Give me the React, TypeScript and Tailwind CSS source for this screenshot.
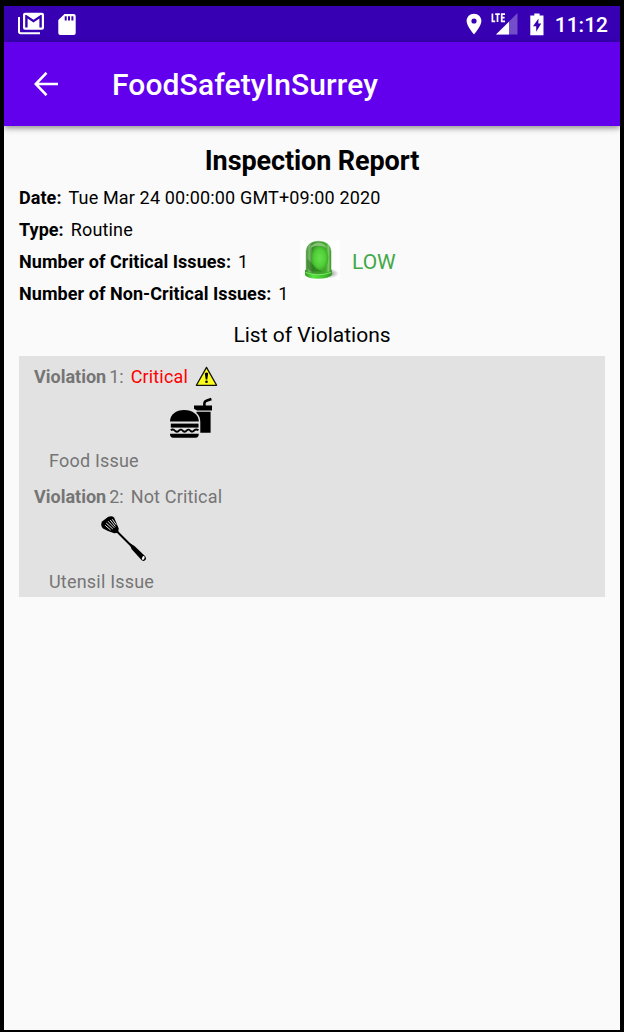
import React from "react";

function GmailIcon() {
  return (
    <svg className="h-[24px] w-[27px] shrink-0" viewBox="0 0 27 24">
      <path d="M1 5V19.5Q1 21.2 2.7 21.2H22" fill="none" stroke="#fff" strokeWidth="2" />
      <path
        fillRule="evenodd"
        fill="#fff"
        d="M7 .8H24Q26 .8 26 2.8V15.8Q26 17.8 24 17.8H7Q5 17.8 5 15.8V2.8Q5 .8 7 .8ZM7.2 3V15.6H9.6V6.6L15.5 10.6L21.4 6.6V15.6H23.8V3H22.6L15.5 7.8L8.4 3Z"
      />
      <path fill="#fff" d="M9 2.4H22L15.5 7Z" />
    </svg>
  );
}

function SdCardIcon() {
  return (
    <svg className="h-[23px] w-[18px] shrink-0" viewBox="0 0 18 23">
      <path
        fillRule="evenodd"
        fill="#fff"
        d="M6.5 1H15.7Q17.7 1 17.7 3V20Q17.7 22 15.7 22H2.3Q.3 22 .3 20V7ZM6.7 3.2V7.4H8.7V3.2ZM10 3.2V7.4H12V3.2ZM13.4 3.2V7.4H15.4V3.2Z"
      />
    </svg>
  );
}

function PinIcon() {
  return (
    <svg className="h-[22px] w-[16px] shrink-0" viewBox="0 0 16 22">
      <path
        fillRule="evenodd"
        fill="#fff"
        d="M8 .7C3.8 .7 .6 3.9 .6 8C.6 13.2 8 21.3 8 21.3S15.4 13.2 15.4 8C15.4 3.9 12.2 .7 8 .7ZM8 5.4A2.6 2.6 0 1 1 8 10.6A2.6 2.6 0 1 1 8 5.4Z"
      />
    </svg>
  );
}

function SignalIcon() {
  return (
    <svg className="h-[22px] w-[27px] shrink-0" viewBox="0 0 27 22">
      <path d="M26.5 0V21.5H5Z" fill="#fff" opacity=".3" />
      <path d="M18 8.7V21.5H5Z" fill="#fff" />
      <path
        d="M1.4 .5V8.3H4.2M4.2 1.2H8.8M6.5 1.2V9M14 1.2H10.7V8.3H14M10.7 4.7H13.6"
        fill="none"
        stroke="#fff"
        strokeWidth="1.7"
      />
    </svg>
  );
}

function BatteryIcon() {
  return (
    <svg className="h-[23px] w-[14px] shrink-0" viewBox="0 0 14 23">
      <path
        fillRule="evenodd"
        fill="#fff"
        d="M4.3 .5H9.6V2.6H13.5V22.2H.3V2.6H4.3ZM8.5 5.5L3 13.2H6.2V18.7L11.2 10.6H8.3Z"
      />
    </svg>
  );
}

function Beacon() {
  return (
    <svg className="h-[40px] w-[40px] shrink-0 bg-white" viewBox="0 0 40 40">
      <defs>
        <linearGradient id="glass">
          <stop offset="0" stopColor="#3f8a2e" />
          <stop offset=".12" stopColor="#7db870" />
          <stop offset=".25" stopColor="#3d932b" />
          <stop offset=".8" stopColor="#41ab2c" />
          <stop offset=".9" stopColor="#79c966" />
          <stop offset="1" stopColor="#3a9428" />
        </linearGradient>
        <radialGradient id="glow">
          <stop offset="0" stopColor="#66e04c" />
          <stop offset=".65" stopColor="#50d038" />
          <stop offset="1" stopColor="#41ab2c" />
        </radialGradient>
        <linearGradient id="rim">
          <stop offset="0" stopColor="#2f9d1d" />
          <stop offset=".3" stopColor="#5ce346" />
          <stop offset=".75" stopColor="#3fbd2c" />
          <stop offset="1" stopColor="#2a931b" />
        </linearGradient>
        <radialGradient id="shade">
          <stop offset="0" stopColor="#555" stopOpacity=".75" />
          <stop offset="1" stopColor="#777" stopOpacity="0" />
        </radialGradient>
      </defs>
      <ellipse cx="29" cy="33.5" rx="10" ry="5" fill="url(#shade)" />
      <path d="M5 30Q18 26 31.8 30V35Q29 38.7 18 38.7Q7 38.7 5 35Z" fill="url(#rim)" />
      <path
        d="M6.2 31V11Q7 1.5 18.5 1.2Q30 1.5 31 11V31Q26 34 18.5 34Q10 34 6.2 31Z"
        fill="url(#glass)"
        stroke="#4d9e3c"
        strokeWidth=".5"
      />
      <ellipse cx="19.8" cy="18" rx="8.5" ry="12.5" fill="url(#glow)" />
      <path d="M10 8Q13 2.6 18.5 2.5Q24 2.6 27 8Q18 3.5 10 8Z" fill="#b6d9aa" opacity=".6" />
      <path d="M7.5 19Q11 22 14 26T22 31.5L12 31.5Q8 30 7.5 27Z" fill="#246f17" opacity=".5" />
      <path d="M5.5 32.5Q18 37 31 32.5" fill="none" stroke="#75e860" strokeWidth="1.2" />
    </svg>
  );
}

function WarningIcon() {
  return (
    <svg className="h-[21px] w-[23px] shrink-0" viewBox="0 0 23 21">
      <path d="M11.5 1.4L21.6 19.3H1.4Z" fill="#fcfc1c" stroke="#111" strokeWidth="1.3" strokeLinejoin="round" />
      <path d="M9.8 7.3Q11.5 5.6 13.2 7.3L12.3 13.5H10.7Z" fill="#000" />
      <circle cx="11.5" cy="15.8" r="1.3" fill="#000" />
    </svg>
  );
}

function FoodIcon() {
  return (
    <svg className="h-[42px] w-[44px] shrink-0" viewBox="0 0 44 42">
      <path d="M35.4 10V7.2Q35.6 5.4 37.4 4.8L42.4 3" fill="none" stroke="#000" strokeWidth="2.6" />
      <path d="M25 9.6H43V14.5H28L25 12.8Z" />
      <path d="M27.5 15.8H41.6V36.7H31.3V26Q31.3 20 27.5 17Z" />
      <path d="M1 25.5C1 18.5 7 14 15.2 14S29.8 18.5 29.8 25.5Z" />
      <path d="M1.8 27.6H29.5V31.6H1.8Z" />
      <path
        d="M1.8 34.2Q4.2 32.6 6.2 35Q8.5 36.6 10.2 34.4Q12 32.6 14 35Q16 36.6 17.8 34.4Q19.6 32.6 21.6 35Q23.6 36.6 25.2 34.4Q27 32.6 29.5 34.2"
        fill="none"
        stroke="#000"
        strokeWidth="1.9"
      />
      <path d="M1 37.8H29.8Q29.8 41.7 26.5 41.7H4.2Q1 41.7 1 37.8Z" />
    </svg>
  );
}

function SpatulaIcon() {
  return (
    <svg className="h-[47px] w-[47px] shrink-0" viewBox="0 0 47 47">
      <path d="M2 6.5L8.3 1.8Q12 .3 14 2.5Q16.5 8 18.7 13.5L18.2 17.8L14.2 18.2Q8 16.5 3 13.5Q0 10.5 2 6.5Z" />
      <path
        d="M5.2 10.3L10.6 15M6.2 8L12.8 14M8 6.2L14.3 12.8M10.2 5L15.4 11.5M12.2 4.2L16.2 9.7"
        stroke="#e2e2e2"
        strokeWidth="1"
      />
      <path d="M17 16.5L32 31.5" stroke="#000" strokeWidth="2" />
      <path d="M29.5 28L34.5 31L45.2 41.3Q47 44 44.7 45.6Q42.5 46.5 41 44.5L31.5 34Z" />
      <ellipse cx="43.3" cy="43" rx="1.2" ry="2" transform="rotate(25 43.3 43)" fill="#fff" />
    </svg>
  );
}

function Field({ label, value }: { label: string; value: string }) {
  return (
    <div className="flex h-8 items-center whitespace-nowrap">
      <b className="mr-[7px] tracking-[0.06px]">{label}</b>
      <span className="tracking-[0.15px]">{value}</span>
    </div>
  );
}

export default function App() {
  return (
    <div className="h-[1032px] w-[624px] bg-black px-1 pt-1.5 pb-0.5 font-[Roboto,sans-serif] text-[18px] leading-6 text-black">
      <div className="flex h-full flex-col bg-[#fafafa]">
        <header className="flex h-9 shrink-0 items-center bg-[#3700b3] pr-3 pl-[14px] text-white">
          <GmailIcon />
          <div className="ml-[13px] flex">
            <SdCardIcon />
          </div>
          <div className="ml-auto flex items-center">
            <PinIcon />
            <div className="ml-[9px] flex">
              <SignalIcon />
            </div>
            <div className="mr-[11px] ml-3 flex">
              <BatteryIcon />
            </div>
            <span className="pt-0.5 text-[21px] font-medium">11:12</span>
          </div>
        </header>
        <div className="flex h-[84px] shrink-0 items-center bg-[#6200ee] pl-[30px] text-white shadow-[0_2px_6px_rgba(0,0,0,0.45)]">
          <svg className="h-6 w-6" viewBox="0 0 24 24">
            <path d="M12.5 .8L1.7 12L12.5 23.2M1.7 12H24" fill="none" stroke="#fff" strokeWidth="2.6" />
          </svg>
          <h1 className="ml-[54px] pt-0.5 text-[30px] leading-9 font-medium tracking-[0.11px]">FoodSafetyInSurrey</h1>
        </div>
        <main className="px-[15px] pt-[18px]">
          <h2 className="flex h-[38px] items-start justify-center text-[27px] leading-[34px] font-bold tracking-[-0.1px]">
            Inspection Report
          </h2>
          <div className="flex">
            <div className="w-[281px]">
              <Field label="Date:" value="Tue Mar 24 00:00:00 GMT+09:00 2020" />
              <Field label="Type:" value="Routine" />
              <Field label="Number of Critical Issues:" value="1" />
              <Field label="Number of Non-Critical Issues:" value="1" />
            </div>
            <div className="mt-[58px] flex h-10 items-center">
              <Beacon />
              <span className="ml-3 pt-[3px] text-[21px] text-[#43a847]">LOW</span>
            </div>
          </div>
          <h3 className="mt-3 mb-2 text-center text-[21px] leading-[26px]">List of Violations</h3>
          <section className="flex h-[241px] flex-col bg-[#e2e2e2] pl-[15px] text-[#757575]">
            <div className="flex h-10 items-center whitespace-nowrap">
              <b className="pt-0.5">Violation</b>
              <span className="ml-[3px] pt-0.5">1:</span>
              <span className="ml-[7px] pt-0.5 tracking-[0.15px] text-[#ff0000]">Critical</span>
              <div className="ml-[7px] flex">
                <WarningIcon />
              </div>
            </div>
            <div className="flex h-[53px] pl-[135px]">
              <FoodIcon />
            </div>
            <div className="pl-[15px] tracking-[0.2px]">Food Issue</div>
            <div className="mt-3 flex h-6 items-center whitespace-nowrap">
              <b>Violation</b>
              <span className="ml-[3px]">2:</span>
              <span className="ml-[7px] tracking-[0.17px]">Not Critical</span>
            </div>
            <div className="flex h-[61px] pt-[6px] pl-[66px]">
              <SpatulaIcon />
            </div>
            <div className="pl-[15px] tracking-[0.2px]">Utensil Issue</div>
          </section>
        </main>
      </div>
    </div>
  );
}
